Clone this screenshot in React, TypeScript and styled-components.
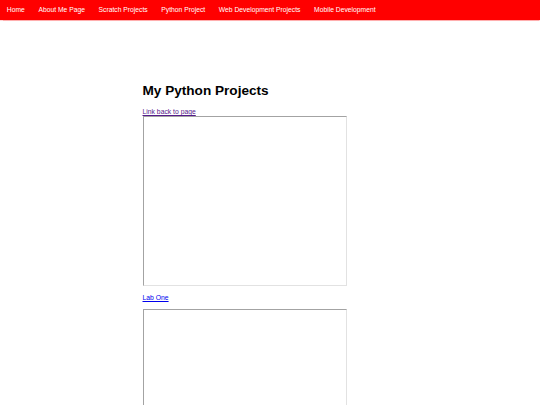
import styled, { createGlobalStyle } from "styled-components";

const GlobalStyle = createGlobalStyle`
  body {
    margin: 0;
    background: #ffffff;
    font-family: "Liberation Sans", Arial, sans-serif;
  }
`;

const TopNav = styled.nav`
  display: flex;
  background: #ff0000;
  box-shadow: 0 0.5px 1px rgba(255, 120, 120, 0.6);
`;

const NavLink = styled.a`
  color: #ffffff;
  text-decoration: none;
  font-size: 6.75px;
  line-height: 7.8px;
  padding: 6px 6.8px;
`;

const Main = styled.main`
  width: 255px;
  margin: 0 auto;
`;

const Title = styled.h1`
  font-size: 13.6px;
  line-height: 15.6px;
  font-weight: bold;
  color: #000000;
  margin: 63px 0 10px;
`;

const PageLink = styled.a<{ visited?: boolean }>`
  display: block;
  width: fit-content;
  font-size: 6.8px;
  line-height: 7.8px;
  color: ${({ visited }) => (visited ? "#551a8b" : "#0000ee")};
  text-decoration: underline;
  text-decoration-thickness: 0.6px;
  text-underline-offset: 1px;
`;

const LinkRow = styled.p`
  margin: 8px 0 7px;
`;

const Frame = styled.div`
  width: 204px;
  height: 170px;
  box-sizing: border-box;
  border-style: solid;
  border-width: 1px;
  border-color: #a3a3a3 #e2e2e2 #e2e2e2 #a3a3a3;
  background: #ffffff;
`;

const links = [
  "Home",
  "About Me Page",
  "Scratch Projects",
  "Python Project",
  "Web Development Projects",
  "Mobile Development",
];

const App = () => {
  return (
    <>
      <GlobalStyle />
      <TopNav>
        {links.map((l) => (
          <NavLink key={l} href="#">
            {l}
          </NavLink>
        ))}
      </TopNav>
      <Main>
        <Title>My Python Projects</Title>
        <PageLink href="#" visited>
          Link back to page
        </PageLink>
        <Frame />
        <LinkRow>
          <PageLink href="#">Lab One</PageLink>
        </LinkRow>
        <Frame />
      </Main>
    </>
  );
};

export default App;
